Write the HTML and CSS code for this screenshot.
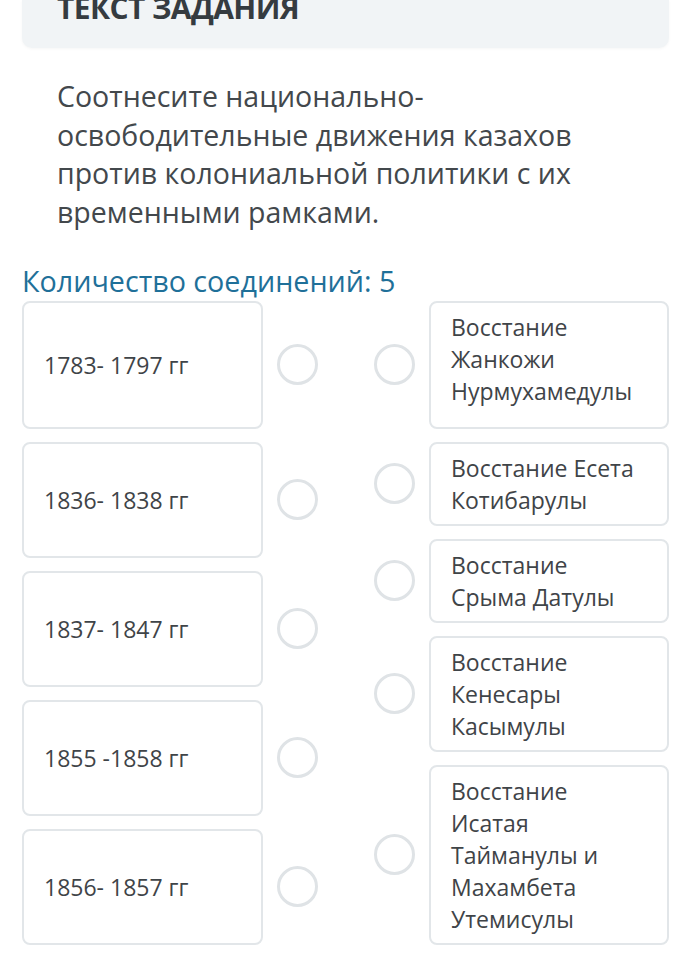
FILE: index.html
```html
<!DOCTYPE html>
<html lang="ru">
<head>
<meta charset="utf-8">
<link rel="stylesheet" href="styles.css">
</head>
<body>
<div class="page">
  <div class="task-header"><span class="task-title">ТЕКСТ ЗАДАНИЯ</span></div>
  <p class="question">Соотнесите национально-освободительные движения казахов против колониальной политики с их временными рамками.</p>
  <div class="count">Количество соединений: 5</div>
  <div class="pairs">
    <div class="col col-left">
      <div class="item"><div class="card card-left first">1783- 1797 гг</div><span class="dot"></span></div>
      <div class="item"><div class="card card-left">1836- 1838 гг</div><span class="dot"></span></div>
      <div class="item"><div class="card card-left">1837- 1847 гг</div><span class="dot"></span></div>
      <div class="item"><div class="card card-left">1855 -1858 гг</div><span class="dot"></span></div>
      <div class="item"><div class="card card-left">1856- 1857 гг</div><span class="dot"></span></div>
    </div>
    <div class="col col-right">
      <div class="item"><span class="dot"></span><div class="card card-right first">Восстание Жанкожи Нурмухамедулы</div></div>
      <div class="item"><span class="dot"></span><div class="card card-right">Восстание Есета Котибарулы</div></div>
      <div class="item"><span class="dot"></span><div class="card card-right">Восстание Срыма Датулы</div></div>
      <div class="item"><span class="dot"></span><div class="card card-right">Восстание Кенесары Касымулы</div></div>
      <div class="item"><span class="dot"></span><div class="card card-right">Восстание Исатая Тайманулы и Махамбета Утемисулы</div></div>
    </div>
  </div>
</div>
</body>
</html>
```
FILE: styles.css
```css
html, body {
  margin: 0;
  padding: 0;
  background: #ffffff;
}
body {
  font-family: "Open Sans", "Noto Sans", sans-serif;
  color: #3f4448;
}
.page {
  width: 647px;
  margin-left: 22px;
}
.task-header {
  background: #f1f4f6;
  border-radius: 0 0 10px 10px;
  height: 48px;
  box-shadow: 0 1px 3px rgba(0,0,0,0.04);
  overflow: hidden;
}
.task-title {
  display: block;
  padding-left: 35px;
  margin-top: -12px;
  font-size: 30px;
  line-height: 40px;
  font-weight: 700;
  color: #353b40;
  letter-spacing: -0.6px;
}
.question {
  margin: 29px 0 0 0;
  padding: 0 58px 0 35px;
  font-size: 28.5px;
  line-height: 38.7px;
  color: #43484c;
}
.count {
  margin-top: 31px;
  font-size: 28.7px;
  line-height: 36px;
  color: #1f7099;
}
.pairs {
  margin-top: 2px;
  display: flex;
  justify-content: space-between;
}
.col {
  display: flex;
  flex-direction: column;
  gap: 13px;
}
.item {
  display: flex;
  align-items: center;
  gap: 14px;
}
.card {
  box-sizing: border-box;
  background: #fff;
  border: 2px solid #e2e6e9;
  border-radius: 8px;
  font-size: 23px;
  line-height: 32px;
  color: #3f4448;
}
.card-left {
  width: 241px;
  height: 116px;
  padding: 0 20px;
  display: flex;
  align-items: center;
}
.card-left.first {
  height: 128px;
}
.card-right {
  width: 240px;
  padding: 8px 32px 8px 20px;
}
.card-right.first {
  min-height: 128px;
}
.dot {
  box-sizing: border-box;
  width: 41px;
  height: 41px;
  border-radius: 50%;
  border: 3px solid #dfe3e6;
  flex: none;
}
```
